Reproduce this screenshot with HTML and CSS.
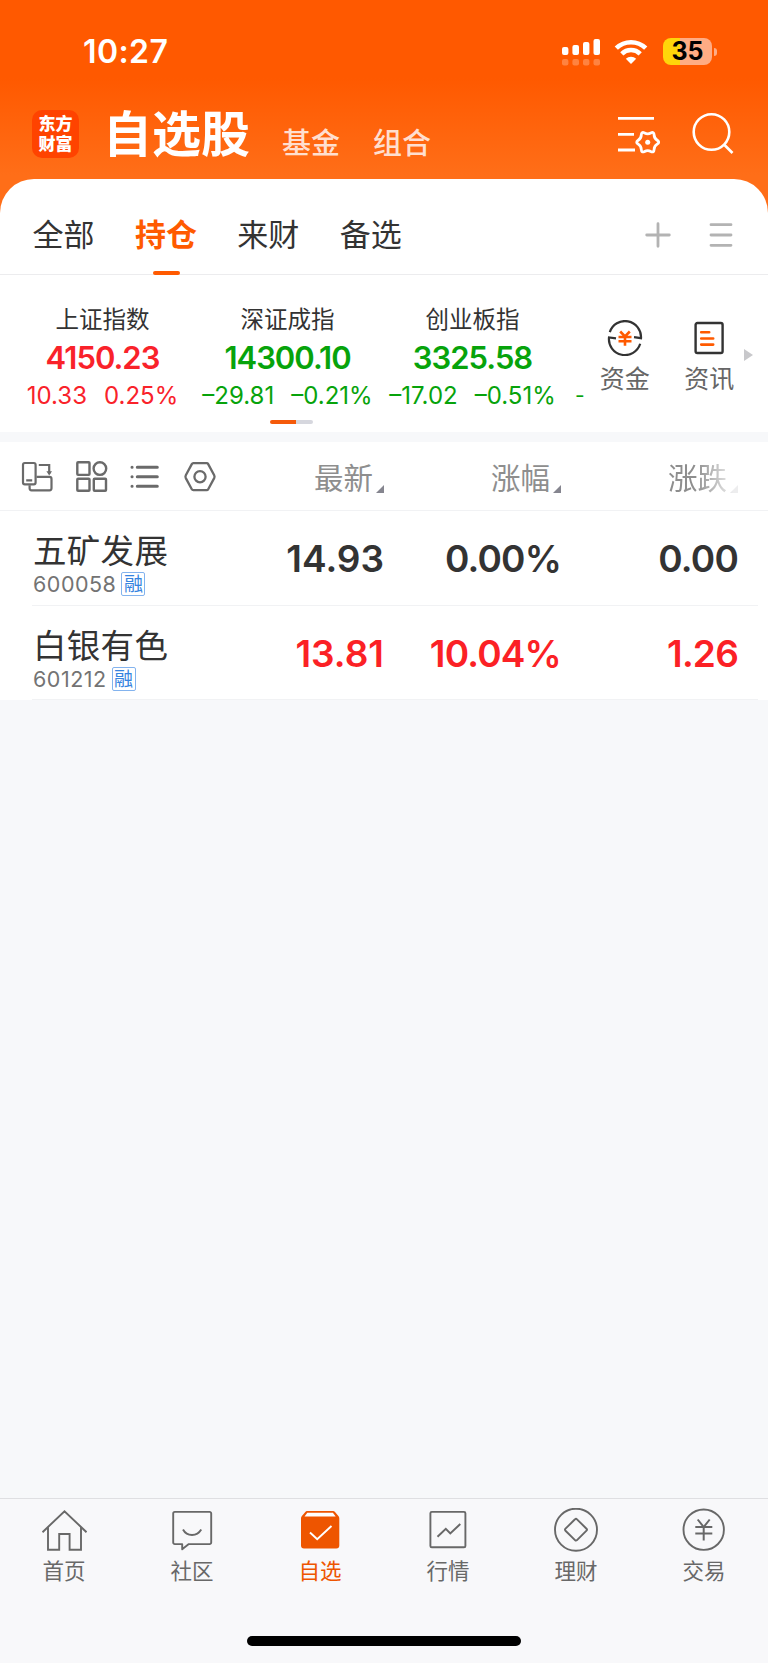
FILE: index.html
```html
<!DOCTYPE html>
<html lang="zh-CN">
  <head>
    <meta charset="UTF-8" />
    <meta name="viewport" content="width=device-width, initial-scale=1.0" />
    <title>自选股</title>
    <link rel="stylesheet" href="styles.css">
  </head>
  <body>
    <header class="header">
      <div class="status-bar">
        <span class="time">10:27</span>
        <div class="status-icons">
          <svg class="signal" width="39" height="28" viewBox="0 0 39 28" fill="#fff">
            <rect x="0" y="9" width="6.4" height="8" rx="2" />
            <rect x="10.4" y="7" width="6.6" height="10" rx="2" />
            <rect x="21" y="4" width="6.4" height="13" rx="2" />
            <rect x="31.5" y="1" width="6.5" height="16" rx="2" />
            <g opacity="0.25">
              <rect x="0" y="21" width="6.4" height="6.4" rx="2" />
              <rect x="10.4" y="21" width="6.6" height="6.4" rx="2" />
              <rect x="21" y="21" width="6.4" height="6.4" rx="2" />
              <rect x="31.5" y="21" width="6.5" height="6.4" rx="2" />
            </g>
          </svg>
          <svg class="wifi" width="34" height="26" viewBox="0 0 34 26">
            <g fill="none" stroke="#fff" stroke-width="4.6">
              <path d="M2.3 9.2a21 21 0 0 1 29.4 0" />
              <path d="M7.8 14.8a13.2 13.2 0 0 1 18.4 0" />
            </g>
            <path d="M17 25l-5.2-5.2a7.4 7.4 0 0 1 10.4 0z" fill="#fff" />
          </svg>
          <div class="battery">35</div>
          <div class="battery-cap"></div>
        </div>
      </div>
      <div class="nav">
        <div class="logo">东方<br />财富</div>
        <h1>自选股</h1>
        <a class="nav-link">基金</a>
        <a class="nav-link">组合</a>
        <svg class="filter" width="44" height="44" viewBox="0 0 44 44" fill="none" stroke="#fff" stroke-width="2.8">
          <path d="M2 7.3h36M2 23.3h16M2 39h17" />
          <path transform="translate(31.7 31.2)" d="M9.5-1.9Q12.5 0 9.5 1.9Q6.5 3.75 6.4 7.3Q6.25 10.8 3.1 9.2Q0 7.5-3.1 9.2Q-6.25 10.8-6.4 7.3Q-6.5 3.75-9.5 1.9Q-12.5 0-9.5-1.9Q-6.5-3.75-6.4-7.3Q-6.25-10.8-3.1-9.2Q0-7.5 3.1-9.2Q6.25-10.8 6.4-7.3Q6.5-3.75 9.5-1.9Z" />
          <circle cx="31.7" cy="31.2" r="2.5" fill="#fff" stroke="none" />
        </svg>
        <svg class="search" width="44" height="44" viewBox="0 0 44 44" fill="none" stroke="#fff" stroke-width="2.6">
          <circle cx="21.5" cy="21" r="17.8" />
          <path d="M34 33.500l8.500 8.500" />
        </svg>
      </div>
    </header>

    <section class="card">
      <div class="tabs">
        <a class="tab">全部</a>
        <a class="tab active">持仓</a>
        <a class="tab">来财</a>
        <a class="tab">备选</a>
        <svg class="plus" width="26" height="26" viewBox="0 0 26 26" stroke="#b3b3b3" stroke-width="2.8" stroke-linecap="round">
          <path d="M13 1.7v22.6M1.7 13h22.6" />
        </svg>
        <svg class="menu" width="24" height="26" viewBox="0 0 24 26" stroke="#b3b3b3" stroke-width="2.8" stroke-linecap="round">
          <path d="M2 2.7h20M2 13h20M2 23.3h20" />
        </svg>
      </div>

      <div class="market">
        <div class="quotes">
          <div class="quote up">
            <div class="quote-name">上证指数</div>
            <div class="quote-value">4150.23</div>
            <div class="quote-change"><span>10.33</span><span>0.25%</span></div>
          </div>
          <div class="quote down">
            <div class="quote-name">深证成指</div>
            <div class="quote-value">14300.10</div>
            <div class="quote-change"><span>–29.81</span><span>–0.21%</span></div>
          </div>
          <div class="quote down">
            <div class="quote-name">创业板指</div>
            <div class="quote-value">3325.58</div>
            <div class="quote-change"><span>–17.02</span><span>–0.51%</span></div>
          </div>
          <div class="quote-more">-</div>
          <div class="pager"></div>
        </div>
        <div class="shortcut">
          <svg width="36" height="36" viewBox="0 0 36 36" fill="none" stroke="#333" stroke-width="2.2">
            <path d="M2.800 12.200A16 16 0 0 1 34 18.200l-7-1" />
            <path d="M33.200 23.800A16 16 0 0 1 2 17.400l7 1" />
            <path d="M13.2 11.5l4.8 4.8 4.8-4.8M11.5 17h13M11.5 21.2h13M18 16v9.8" stroke="#ff5a00" stroke-width="2.6" />
          </svg>
          <span>资金</span>
        </div>
        <div class="shortcut">
          <svg width="36" height="36" viewBox="0 0 36 36" fill="none" stroke="#333" stroke-width="2.4">
            <rect x="4.6" y="3" width="27" height="30" rx="1.8" />
            <path d="M10.2 12.3h8M10.2 18.5h12M10.2 24.6h12" stroke="#ff5a00" stroke-width="2.6" stroke-linecap="round" />
          </svg>
          <span>资讯</span>
        </div>
        <div class="arrow"></div>
      </div>
    </section>

    <section class="stocks">
      <div class="table-head">
        <div class="tools">
          <svg width="34" height="34" viewBox="0 0 34 34" fill="none" stroke="#6a6a6a" stroke-width="2.2">
            <path d="M8.6 25.2v3.1a2 2 0 0 0 2 2h17.9a2 2 0 0 0 2-2v-9.4a2 2 0 0 0-2-2H15.5" />
            <rect x="2" y="3" width="12.6" height="21.4" rx="1.8" />
            <path d="M5.2 20.4h6M17.8 5h10.4v9" />
            <path d="M25.4 11.300h5.600l-2.800 4.200z" fill="#6a6a6a" stroke="none" />
          </svg>
          <svg width="34" height="34" viewBox="0 0 34 34" fill="none" stroke="#6a6a6a" stroke-width="2.4">
            <rect x="2.3" y="2.3" width="12.2" height="12.6" rx=".8" />
            <circle cx="24.9" cy="8.6" r="6.3" />
            <rect x="2.3" y="18.8" width="12.2" height="12" rx=".8" />
            <rect x="18.8" y="18.8" width="12.2" height="12" rx=".8" />
          </svg>
          <svg width="34" height="34" viewBox="0 0 34 34" fill="none" stroke="#6a6a6a" stroke-width="3" stroke-linecap="round">
            <path d="M8.3 7.3h20M8.3 16.8h20M8.3 26.2h20M3 7.3h.1M3 16.8h.1M3 26.2h.1" />
          </svg>
          <svg width="34" height="34" viewBox="0 0 34 34" fill="none" stroke="#6a6a6a" stroke-width="2.3" stroke-linejoin="round">
            <path d="M10.3 3.2h13.4q1 0 1.5.9l6 11.2q.7 1.4 0 2.8l-6 11.2q-.5.9-1.5.9H10.3q-1 0-1.5-.9l-6-11.2q-.7-1.4 0-2.8l6-11.2q.5-.9 1.5-.9z" />
            <circle cx="17" cy="16.7" r="5.6" />
          </svg>
        </div>
        <div class="col sort">最新</div>
        <div class="col sort">涨幅</div>
        <div class="col sort fade">涨跌</div>
      </div>
      <div class="row">
        <div class="stock">
          <div class="stock-name">五矿发展</div>
          <div class="stock-code">600058<span class="tag">融</span></div>
        </div>
        <div class="col">14.93</div>
        <div class="col change">0.00%</div>
        <div class="col change">0.00</div>
      </div>
      <div class="row red">
        <div class="stock">
          <div class="stock-name">白银有色</div>
          <div class="stock-code">601212<span class="tag">融</span></div>
        </div>
        <div class="col">13.81</div>
        <div class="col change">10.04%</div>
        <div class="col change">1.26</div>
      </div>
    </section>

    <footer class="footer">
      <nav class="tabbar">
        <a class="item">
          <svg width="46" height="46" viewBox="0 0 46 46" fill="none" stroke="#686868" stroke-width="1.9">
            <path d="M1.5 24.2L23.5 3.2l22 21M7 19.5v22.2h11.2V26h10.4v15.7h11.4V19.5" />
          </svg>
          <span>首页</span>
        </a>
        <a class="item">
          <svg width="46" height="46" viewBox="0 0 46 46" fill="none" stroke="#686868" stroke-width="1.9" stroke-linejoin="round">
            <path d="M5.8 3.9h34.8a1.6 1.6 0 0 1 1.6 1.6v29a1.6 1.6 0 0 1-1.6 1.6H19.8l-6.6 5.2v-5.2H5.8a1.6 1.6 0 0 1-1.6-1.6v-29a1.6 1.6 0 0 1 1.6-1.6z" />
            <path d="M14 21.5c4 7.3 14 7.3 18.2 0" />
          </svg>
          <span>社区</span>
        </a>
        <a class="item current">
          <svg width="46" height="46" viewBox="0 0 46 46">
            <path d="M10 3h26q1.2 0 2 .9l3.6 4.400q.7.8.7 1.900v27.300a3 3 0 0 1-3 3H7a3 3 0 0 1-3-3V10.200q0-1.100.7-1.900l3.600-4.400Q9 3 10 3z" fill="#ee5500" />
            <path d="M10.300 4.800h25.600l2.800 3.600H7.500z" fill="#fff" />
            <path d="M13 24.500l7.200 6.800L34.500 18" fill="none" stroke="#fff" stroke-width="1.900" />
          </svg>
          <span>自选</span>
        </a>
        <a class="item">
          <svg width="46" height="46" viewBox="0 0 46 46" fill="none" stroke="#686868" stroke-width="1.9">
            <rect x="5.400" y="3.900" width="35" height="35.400" rx="1.400" />
            <path d="M12.500 28.800l8.300-8 4.500 4.600 10-9.400" stroke-width="2" />
          </svg>
          <span>行情</span>
        </a>
        <a class="item">
          <svg width="46" height="46" viewBox="0 0 46 46" fill="none" stroke="#686868" stroke-width="1.9" stroke-linejoin="round">
            <circle cx="23" cy="21.700" r="21" />
            <path d="M22 11.300q1-1 2 0l9.500 9.400q1 1 0 2L24 32.100q-1 1-2 0l-9.500-9.400q-1-1 0-2z" />
          </svg>
          <span>理财</span>
        </a>
        <a class="item">
          <svg width="46" height="46" viewBox="0 0 46 46" fill="none" stroke="#686868" stroke-width="1.9">
            <circle cx="22.700" cy="21.700" r="20.200" />
            <path d="M16.700 11.500l6 7.500 6-7.500M14.300 19h17M14.300 25.400h17M22.700 19v13.500" stroke-width="2" />
          </svg>
          <span>交易</span>
        </a>
      </nav>
      <div class="home-bar"></div>
    </footer>
  </body>
</html>
```
FILE: styles.css
```css
* {
  box-sizing: border-box;
}
body {
  display: flex;
  flex-direction: column;
  height: 1663px;
  margin: 0;
  background-color: #f7f8fa;
  color: #333;
  font-family: Inter, "Noto Sans CJK SC", sans-serif;
}
svg {
  display: block;
  flex: none;
}

/* header */
.header {
  height: 230px;
  background: linear-gradient(#ff5900 0, #ff5900 78px, #ff6e18 175px);
  color: white;
}
.status-bar {
  display: flex;
  justify-content: space-between;
  align-items: center;
  height: 103px;
  padding: 0 51px 0 83px;
}
.time {
  font-size: 32px;
  font-weight: 600;
  letter-spacing: 0.4px;
}
.status-icons {
  display: flex;
  align-items: center;
}
.wifi {
  margin: 0 15px 0 13px;
}
.battery {
  width: 49px;
  height: 27px;
  border-radius: 8px;
  background: linear-gradient(90deg, #ffd60a 17px, #ffac84 17px);
  color: black;
  font-size: 25px;
  font-weight: 700;
  line-height: 27px;
  text-align: center;
}
.battery-cap {
  width: 3px;
  height: 8px;
  margin-left: 2px;
  border-radius: 0 4px 4px 0;
  background-color: #ffac84;
}
.nav {
  display: flex;
  height: 77px;
  padding: 0 34px 0 32px;
}
.logo {
  width: 47px;
  height: 48px;
  margin-top: 7px;
  padding-top: 4px;
  border-radius: 10px;
  background-color: #ff4300;
  font-size: 17px;
  font-weight: 900;
  line-height: 20px;
  text-align: center;
}
h1 {
  margin: 0 0 0 24px;
  font-size: 49px;
  font-weight: 600;
  line-height: 63px;
}
.nav-link {
  margin-left: 33px;
  color: #ffdfcf;
  font-size: 29px;
  font-weight: 500;
  line-height: 82px;
}
.nav-link:nth-of-type(1) {
  margin-left: 32px;
}
.filter {
  margin: 8px 30px 0 auto;
}
.search {
  margin-top: 8px;
}

/* watchlist groups and indices */
.card {
  height: 253px;
  margin-top: -51px;
  border-radius: 34px 34px 0 0;
  background-color: white;
}
.tabs {
  display: flex;
  align-items: center;
  height: 96px;
  padding: 17px 35px 0 32.5px;
  border-bottom: 1px solid #ececee;
}
.tab {
  position: relative;
  margin-right: 40.4px;
  font-size: 31px;
  line-height: 78px;
}
.tab.active {
  color: #ff5a00;
  font-weight: 600;
}
.tab.active::after {
  content: "";
  position: absolute;
  left: 18px;
  bottom: -1px;
  width: 27px;
  height: 4px;
  border-radius: 2px;
  background-color: #ff5a00;
}
.plus {
  margin-left: auto;
}
.menu {
  margin-left: 38px;
}
.market {
  display: flex;
  height: 157px;
}
.quotes {
  display: flex;
  position: relative;
  flex: none;
  width: 588px;
  padding-left: 10px;
}
.quote {
  flex: none;
  width: 185px;
  padding-top: 27px;
  text-align: center;
  white-space: nowrap;
}
.quote-name {
  font-size: 23.5px;
  line-height: 36px;
}
.quote-value {
  font-size: 31px;
  font-weight: 600;
  line-height: 39px;
  letter-spacing: -1px;
}
.quote-change {
  display: flex;
  justify-content: center;
  gap: 17px;
  font-size: 24px;
  line-height: 38px;
}
.up {
  color: #f9222a;
}
.down {
  color: #07a30b;
}
.quote-name {
  color: #333;
}
.quote-more {
  padding: 102px 0 0 10px;
  color: #07a30b;
  font-size: 21px;
  line-height: 38px;
}
.pager {
  position: absolute;
  left: 270px;
  bottom: 8px;
  width: 43px;
  height: 4px;
  border-radius: 2px;
  background: linear-gradient(90deg, #f55a0a 26px, #d6d7de 26px);
}
.shortcut {
  display: flex;
  flex: none;
  flex-direction: column;
  align-items: center;
  width: 84.5px;
  padding-top: 45px;
  color: #666;
  font-size: 25px;
  line-height: 46px;
}
.quotes + .shortcut {
  margin-left: -5.5px;
}
.arrow {
  margin: 74px 0 0 -8px;
  width: 0;
  height: 0;
  border: 6.5px solid transparent;
  border-left: 9px solid #c8c8cb;
  border-right: 0;
}

/* stock table */
.stocks {
  margin-top: 10px;
  background-color: white;
}
.table-head {
  display: flex;
  align-items: center;
  height: 69px;
  border-bottom: 1px solid #f1f2f4;
}
.tools {
  display: flex;
  gap: 20px;
  width: 207px;
  padding: 1px 0 0 20.5px;
}
.col {
  width: 177px;
  text-align: right;
}
.sort {
  display: flex;
  justify-content: flex-end;
  align-items: center;
  color: #8e8e8e;
  font-size: 29.5px;
}
.sort::after {
  content: "";
  align-self: flex-end;
  margin: 0 0 4px 3px;
  border-left: 8px solid transparent;
  border-bottom: 8px solid #85858f;
}
.fade {
  mask-image: linear-gradient(90deg, #000 135px, rgba(0, 0, 0, 0.15) 172px);
}
.row {
  display: flex;
  height: 94.5px;
  margin-right: 10px;
  margin-left: 32px;
  border-bottom: 1px solid #f1f2f4;
}
.row .col {
  font-size: 37px;
  font-weight: 600;
  line-height: 95px;
}
.row .change {
  letter-spacing: -0.8px;
}
.row.red .col {
  color: #fb2125;
}
.stock {
  width: 175px;
  padding: 20px 0 0 1px;
  white-space: nowrap;
}
.stock-name {
  font-size: 33.5px;
  line-height: 41px;
  letter-spacing: 0.3px;
}
.stock-code {
  display: flex;
  align-items: center;
  height: 24px;
  color: #737373;
  font-size: 21.5px;
  letter-spacing: 0.5px;
}
.tag {
  width: 24px;
  height: 24px;
  margin-left: 5px;
  border: 1.5px solid #83b3ee;
  border-radius: 2px;
  color: #3584e0;
  font-size: 19px;
  line-height: 23px;
  letter-spacing: 0;
  text-align: center;
}

/* bottom bar */
.footer {
  height: 165px;
  margin-top: auto;
  border-top: 1px solid #dfdfe2;
  background-color: #f8f8fa;
}
.tabbar {
  display: flex;
  height: 137px;
}
.item {
  display: flex;
  flex-direction: column;
  align-items: center;
  width: 128px;
  padding-top: 9px;
  color: #686868;
  font-size: 21.5px;
  line-height: 34px;
}
.item.current {
  color: #ee5500;
}
.home-bar {
  width: 274px;
  height: 10px;
  margin: 0 auto;
  border-radius: 5px;
  background-color: black;
}
```
